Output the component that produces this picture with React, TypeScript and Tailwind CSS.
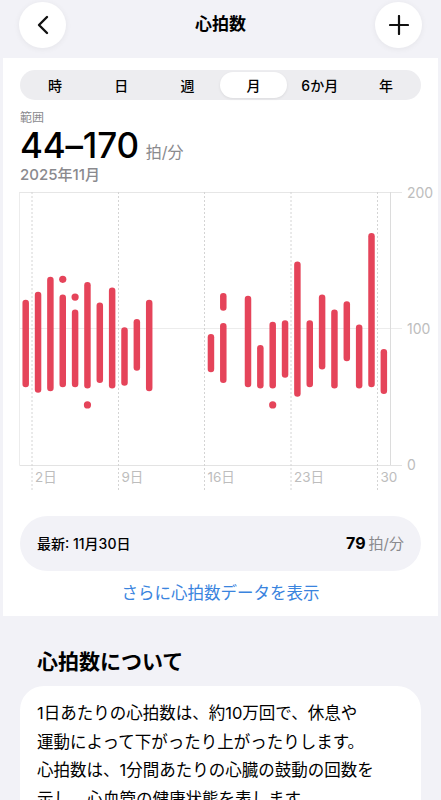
import React from 'react';

type Day = { d: number; bars: [number, number][]; dots?: number[] };

const days: Day[] = [
  { d: 1, bars: [[57, 121]] },
  { d: 2, bars: [[53, 127]] },
  { d: 3, bars: [[54, 138]] },
  { d: 4, bars: [[57, 125]], dots: [136] },
  { d: 5, bars: [[57, 114]], dots: [123] },
  { d: 6, bars: [[56, 134]], dots: [44] },
  { d: 7, bars: [[60, 119]] },
  { d: 8, bars: [[56, 130]] },
  { d: 9, bars: [[58, 101]] },
  { d: 10, bars: [[69, 107]] },
  { d: 11, bars: [[54, 121]] },
  { d: 16, bars: [[68, 96]] },
  { d: 17, bars: [[113, 126], [60, 104]] },
  { d: 19, bars: [[57, 124]] },
  { d: 20, bars: [[56, 88]] },
  { d: 21, bars: [[56, 105]], dots: [44] },
  { d: 22, bars: [[64, 106]] },
  { d: 23, bars: [[50, 149]] },
  { d: 24, bars: [[57, 106]] },
  { d: 25, bars: [[70, 125]] },
  { d: 26, bars: [[56, 114]] },
  { d: 27, bars: [[76, 120]] },
  { d: 28, bars: [[56, 103]] },
  { d: 29, bars: [[57, 170]] },
  { d: 30, bars: [[52, 85]] },
];

const font = 'Inter, "Noto Sans CJK JP", sans-serif';
const yOf = (bpm: number) => 280 - bpm * 1.365;
const xOf = (d: number) => 25.7 + (d - 1) * 12.35;
const weekLines = [32, 118.5, 204.5, 291, 377.5];
const weekLabels = ['2日', '9日', '16日', '23日'];

const HeartChart: React.FC = () => (
  <svg width="441" height="305" viewBox="0 0 441 305" className="block -ml-[20px]">
    <defs>
      <clipPath id="lastLabel">
        <rect x="0" y="0" width="399" height="305" />
      </clipPath>
    </defs>
    {/* grid */}
    <line x1="19.5" y1="7" x2="19.5" y2="280" stroke="#ececec" />
    <line x1="19.5" y1="7.5" x2="402" y2="7.5" stroke="#e6e6e6" />
    <line x1="19.5" y1="143.5" x2="402" y2="143.5" stroke="#ececec" />
    <line x1="19.5" y1="280.5" x2="402" y2="280.5" stroke="#e3e3e3" />
    <line x1="390.5" y1="7" x2="390.5" y2="280" stroke="#dcdcdc" />
    {weekLines.map((x) => (
      <line key={x} x1={x} y1="7" x2={x} y2="305" stroke="#d4d4d4" strokeDasharray="2 2" />
    ))}
    {/* y axis labels */}
    {[
      ['200', 7.5],
      ['100', 144],
      ['0', 280],
    ].map(([t, y]) => (
      <text key={t} x="407" y={Number(y) + 5} fontSize="14" fill="#bdbdbd" fontFamily={font}>
        {t}
      </text>
    ))}
    {/* x axis labels */}
    {weekLabels.map((t, i) => (
      <text key={t} x={weekLines[i] + 3} y="297" fontSize="13.5" fill="#bdbdbd" fontFamily={font}>
        {t}
      </text>
    ))}
    <text x={weekLines[4] + 3} y="297" fontSize="13.5" fill="#bdbdbd" fontFamily={font} clipPath="url(#lastLabel)">
      30日
    </text>
    {/* bars */}
    {days.map((day) => (
      <g key={day.d} fill="#e5445a">
        {day.bars.map(([lo, hi], i) => (
          <rect key={i} x={xOf(day.d) - 3.25} y={yOf(hi)} width="6.5" height={yOf(lo) - yOf(hi)} rx="3.25" />
        ))}
        {day.dots?.map((v, i) => (
          <circle key={`c${i}`} cx={xOf(day.d)} cy={yOf(v)} r="3.6" />
        ))}
      </g>
    ))}
  </svg>
);

const tabs = ['時', '日', '週', '月', '6か月', '年'];

const App: React.FC = () => {
  return (
    <div className="min-h-screen bg-[#f2f2f7] text-black" style={{ fontFamily: font }}>
      {/* header */}
      <div className="h-[58px] flex items-center justify-between px-[19px] pb-[10px] pt-[1px]">
        <button className="w-[47px] h-[46px] rounded-full bg-white shadow-[0_1px_6px_rgba(0,0,0,0.06)] flex items-center justify-center">
          <svg width="14" height="20" viewBox="0 0 14 20" fill="none">
            <path d="M11 2L3 10l8 8" stroke="#111" strokeWidth="2.4" strokeLinecap="round" strokeLinejoin="round" />
          </svg>
        </button>
        <div className="text-[17px] font-semibold">心拍数</div>
        <button className="w-[47px] h-[46px] rounded-full bg-white shadow-[0_1px_6px_rgba(0,0,0,0.06)] flex items-center justify-center">
          <svg width="20" height="20" viewBox="0 0 20 20" fill="none">
            <path d="M10 1v18M1 10h18" stroke="#111" strokeWidth="2.2" strokeLinecap="round" />
          </svg>
        </button>
      </div>

      {/* main card */}
      <div className="mx-[3px] bg-white px-[17px] pt-[12px]">
        <div className="h-[30px] rounded-full bg-[#ededf0] grid grid-cols-6 p-[2px]">
          {tabs.map((t) => (
            <div
              key={t}
              className={`flex items-center justify-center rounded-full text-[14px] font-medium ${
                t === '月' ? 'bg-white shadow-[0_1px_3px_rgba(0,0,0,0.08)]' : ''
              }`}
            >
              {t}
            </div>
          ))}
        </div>

        <div className="mt-[11px] text-[12px] leading-[14px] text-[#8a8a8e]">範囲</div>
        <div className="flex items-baseline h-[40px] leading-[40px]">
          <span className="text-[35px] font-medium tracking-[-0.2px]">44–170</span>
          <span className="ml-[7px] text-[16px] text-[#8a8a8e]">拍/分</span>
        </div>
        <div className="text-[15px] leading-[20px] font-medium text-[#8a8a8e]">2025年11月</div>

        <HeartChart />

        <div className="mt-[26px] h-[55px] rounded-full bg-[#f2f2f7] flex items-center justify-between px-[17px]">
          <span className="text-[14px] font-medium">最新: 11月30日</span>
          <span className="flex items-baseline">
            <span className="text-[16px] font-bold">79</span>
            <span className="ml-[3px] text-[15px] text-[#8a8a8e]">拍/分</span>
          </span>
        </div>
        <div className="h-[45px] flex items-center justify-center text-[16.5px] text-[#3a84de]">
          さらに心拍数データを表示
        </div>
      </div>

      {/* about */}
      <div className="px-[20px] pt-[32px]">
        <div className="px-[17px] text-[21px] leading-[28px] font-bold">心拍数について</div>
        <div className="mt-[10px] rounded-[24px] bg-white px-[17px] pt-[13px] pb-[16px] text-[16.5px] leading-[28.7px]">
          1日あたりの心拍数は、約10万回で、休息や
          <br />
          運動によって下がったり上がったりします。
          <br />
          心拍数は、1分間あたりの心臓の鼓動の回数を
          <br />
          示し、心血管の健康状態を表します。
        </div>
      </div>
    </div>
  );
};

export default App;
